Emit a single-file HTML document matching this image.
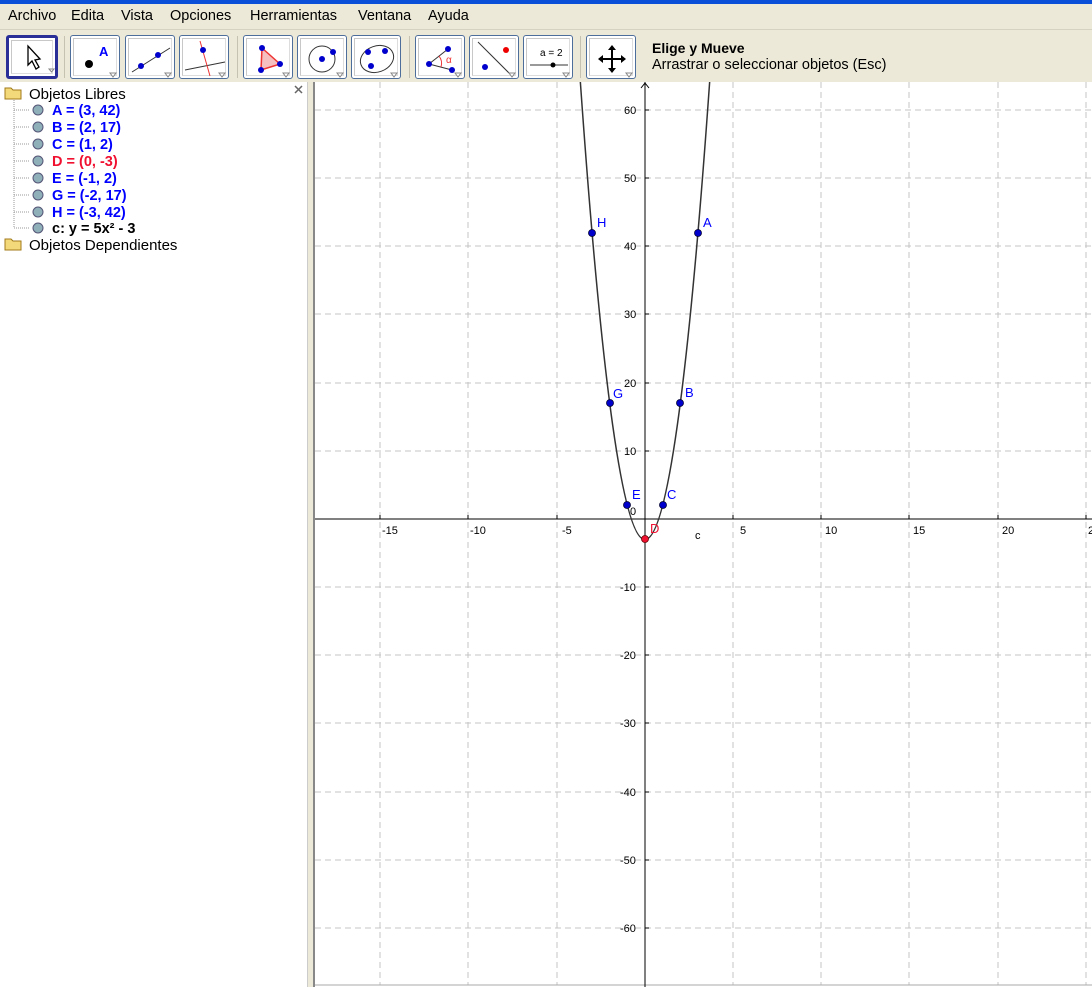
<!DOCTYPE html>
<html><head><meta charset="utf-8"><style>
*{margin:0;padding:0;box-sizing:border-box}
body{width:1092px;height:987px;overflow:hidden;background:#fff;font-family:"Liberation Sans",sans-serif;position:relative}
#top{position:absolute;left:0;top:0;width:1092px;height:4px;background:#0a4fd8}
#menu{position:absolute;left:0;top:4px;width:1092px;height:25px;background:#ece9d8;font-size:14.5px;color:#000}
#menu span{position:absolute;top:4px}
#tb{position:absolute;left:0;top:29px;width:1092px;height:53px;background:#ece9d8;border-top:1px solid #d6d2c2}
.b{position:absolute;top:5px;width:50px;height:44px;border:1px solid #4d6d9a;border-radius:3px;background:#fff}
.b::before{content:"";position:absolute;left:2px;top:2px;right:2px;bottom:2px;border:1px solid #c8c8c8;border-right-color:#ddd;border-bottom-color:#ddd}
.b svg{position:absolute;left:0;top:0}
.sep{position:absolute;top:6px;width:1px;height:42px;background:#c5c2b2}
#left{position:absolute;left:0;top:82px;width:307px;height:905px;background:#fff}
.it{position:absolute;font-size:14.5px;white-space:nowrap}
.bold{font-weight:bold}
</style></head><body>
<div id="top"></div>
<div id="menu">
<span style="left:8px">Archivo</span><span style="left:71px">Edita</span><span style="left:121px">Vista</span><span style="left:170px">Opciones</span><span style="left:250px">Herramientas</span><span style="left:358px">Ventana</span><span style="left:428px">Ayuda</span>
</div>
<div id="tb">
<div class="b" style="left:6px;width:52px;border:3px solid #2a2f98"><svg width="46" height="38"><path d="M19 8 L19 27 L23 23 L27 31 L30 29 L26 22 L31 21 Z" fill="#fff" stroke="#000" stroke-width="1.3"/><path d="M40 31 l5 0 l-2.5 3z" fill="#fff" stroke="#888"/></svg></div>
<div class="sep" style="left:64px"></div>
<div class="b" style="left:70px"><svg width="50" height="44"><circle cx="18" cy="28" r="4" fill="#000"/><text x="28" y="20" font-size="13" font-weight="bold" fill="#00f" font-family="Liberation Sans">A</text><path d="M39 37 l6 0 l-3 4z" fill="#fff" stroke="#888"/></svg></div>
<div class="b" style="left:125px"><svg width="50" height="44"><line x1="6" y1="36" x2="44" y2="12" stroke="#333"/><circle cx="15" cy="30" r="3" fill="#00c"/><circle cx="32" cy="19" r="3" fill="#00c"/><path d="M39 37 l6 0 l-3 4z" fill="#fff" stroke="#888"/></svg></div>
<div class="b" style="left:179px"><svg width="50" height="44"><line x1="5" y1="34" x2="45" y2="26" stroke="#333"/><line x1="20" y1="5" x2="30" y2="40" stroke="#e33"/><circle cx="23" cy="14" r="3" fill="#00c"/><path d="M39 37 l6 0 l-3 4z" fill="#fff" stroke="#888"/></svg></div>
<div class="sep" style="left:237px"></div>
<div class="b" style="left:243px"><svg width="50" height="44"><path d="M18 12 L36 28 L17 34 Z" fill="#f6c0c0" stroke="#e33" stroke-width="1.5"/><circle cx="18" cy="12" r="3" fill="#00c"/><circle cx="36" cy="28" r="3" fill="#00c"/><circle cx="17" cy="34" r="3" fill="#00c"/><path d="M39 37 l6 0 l-3 4z" fill="#fff" stroke="#888"/></svg></div>
<div class="b" style="left:297px"><svg width="50" height="44"><circle cx="24" cy="23" r="13" fill="none" stroke="#333"/><circle cx="24" cy="23" r="3" fill="#00c"/><circle cx="35" cy="16" r="3" fill="#00c"/><path d="M39 37 l6 0 l-3 4z" fill="#fff" stroke="#888"/></svg></div>
<div class="b" style="left:351px"><svg width="50" height="44"><ellipse cx="25" cy="23" rx="17" ry="13" transform="rotate(-20 25 23)" fill="none" stroke="#333"/><circle cx="16" cy="16" r="3" fill="#00c"/><circle cx="33" cy="15" r="3" fill="#00c"/><circle cx="19" cy="30" r="3" fill="#00c"/><path d="M39 37 l6 0 l-3 4z" fill="#fff" stroke="#888"/></svg></div>
<div class="sep" style="left:409px"></div>
<div class="b" style="left:415px"><svg width="50" height="44"><line x1="13" y1="28" x2="32" y2="13" stroke="#333"/><line x1="13" y1="28" x2="36" y2="34" stroke="#333"/><path d="M23 20 A12 12 0 0 1 25 31" fill="none" stroke="#e33"/><text x="30" y="27" font-size="10" fill="#e33">α</text><circle cx="13" cy="28" r="3" fill="#00c"/><circle cx="32" cy="13" r="3" fill="#00c"/><circle cx="36" cy="34" r="3" fill="#00c"/><path d="M39 37 l6 0 l-3 4z" fill="#fff" stroke="#888"/></svg></div>
<div class="b" style="left:469px"><svg width="50" height="44"><line x1="8" y1="6" x2="42" y2="40" stroke="#333"/><circle cx="36" cy="14" r="3" fill="#e00"/><circle cx="15" cy="31" r="3" fill="#00c"/><path d="M39 37 l6 0 l-3 4z" fill="#fff" stroke="#888"/></svg></div>
<div class="b" style="left:523px"><svg width="50" height="44"><text x="16" y="20" font-size="10" font-family="Liberation Sans">a = 2</text><line x1="6" y1="29" x2="44" y2="29" stroke="#333"/><circle cx="29" cy="29" r="2.5" fill="#000"/><path d="M39 37 l6 0 l-3 4z" fill="#fff" stroke="#888"/></svg></div>
<div class="sep" style="left:580px"></div>
<div class="b" style="left:586px"><svg width="50" height="44"><path d="M25 12 V34 M14 23 H36" stroke="#000" stroke-width="2"/><path d="M25 9 l-4 5 h8z M25 37 l-4 -5 h8z M11 23 l5 -4 v8z M39 23 l-5 -4 v8z" fill="#000"/><path d="M39 37 l6 0 l-3 4z" fill="#fff" stroke="#888"/></svg></div>
<div style="position:absolute;left:652px;top:10px;font-size:14px;font-weight:bold">Elige y Mueve</div>
<div style="position:absolute;left:652px;top:27px;font-size:14.5px">Arrastrar o seleccionar objetos (Esc)</div>
</div>
<div id="left">
<svg width="307" height="180" style="position:absolute;left:0;top:0">
<g fill="#f3d97a" stroke="#a07a1a"><path d="M5 6 h6 l2 2 h8 v9 h-16z"/><path d="M5 157 h6 l2 2 h8 v9 h-16z"/></g>
<path d="M14 18 V146 M14 28h15 M14 45h15 M14 62h15 M14 79h15 M14 96h15 M14 113h15 M14 130h15 M14 146h15" stroke="#999" stroke-dasharray="1 1"/>
<g fill="#8fb0b8" stroke="#557"><circle cx="38" cy="28" r="5"/><circle cx="38" cy="45" r="5"/><circle cx="38" cy="62" r="5"/><circle cx="38" cy="79" r="5"/><circle cx="38" cy="96" r="5"/><circle cx="38" cy="113" r="5"/><circle cx="38" cy="130" r="5"/><circle cx="38" cy="146" r="5"/></g>
<path d="M295 4 l7 7 M302 4 l-7 7" stroke="#666" stroke-width="1.5"/>
</svg>
<div class="it" style="left:29px;top:4px;font-size:15px">Objetos Libres</div>
<div class="it bold" style="left:52px;top:21px;color:#00f">A = (3, 42)</div>
<div class="it bold" style="left:52px;top:38px;color:#00f">B = (2, 17)</div>
<div class="it bold" style="left:52px;top:55px;color:#00f">C = (1, 2)</div>
<div class="it bold" style="left:52px;top:72px;color:#f01030">D = (0, -3)</div>
<div class="it bold" style="left:52px;top:89px;color:#00f">E = (-1, 2)</div>
<div class="it bold" style="left:52px;top:106px;color:#00f">G = (-2, 17)</div>
<div class="it bold" style="left:52px;top:123px;color:#00f">H = (-3, 42)</div>
<div class="it bold" style="left:52px;top:139px">c: y = 5x² - 3</div>
<div class="it" style="left:29px;top:155px;font-size:15px">Objetos Dependientes</div>
</div>
<div style="position:absolute;left:307px;top:82px;width:1px;height:905px;background:#ccc"></div>
<div style="position:absolute;left:308px;top:82px;width:5px;height:905px;background:#ece9d8"></div>
<div style="position:absolute;left:313px;top:82px;width:2px;height:905px;background:#888"></div>
<svg width="777" height="905" style="position:absolute;left:315px;top:82px" font-family="Liberation Sans" font-size="11">
<g stroke="#c4c4c4" stroke-dasharray="6 4" stroke-width="1">
<path d="M65 0V903 M153 0V903 M242 0V903 M418 0V903 M506 0V903 M594 0V903 M683 0V903 M771 0V903"/>
<path d="M0 28H777 M0 96H777 M0 164H777 M0 232H777 M0 301H777 M0 369H777 M0 505H777 M0 573H777 M0 641H777 M0 710H777 M0 778H777 M0 846H777"/>
</g>
<line x1="0" y1="903" x2="777" y2="903" stroke="#aaa"/>
<line x1="0" y1="437" x2="777" y2="437" stroke="#000"/>
<line x1="330" y1="0" x2="330" y2="905" stroke="#000"/>
<path d="M326 6 L330 1 L334 6" fill="none" stroke="#000"/>
<g stroke="#000"><path d="M65 433v4 M153 433v4 M242 433v4 M418 433v4 M506 433v4 M594 433v4 M683 433v4 M771 433v4 M330 28h4 M330 96h4 M330 164h4 M330 232h4 M330 301h4 M330 369h4 M330 505h4 M330 573h4 M330 641h4 M330 710h4 M330 778h4 M330 846h4"/></g>
<g fill="#000">
<text x="67" y="452">-15</text><text x="155" y="452">-10</text><text x="247" y="452">-5</text><text x="425" y="452">5</text><text x="510" y="452">10</text><text x="598" y="452">15</text><text x="687" y="452">20</text><text x="773" y="452">25</text>
<text x="309" y="32">60</text><text x="309" y="100">50</text><text x="309" y="168">40</text><text x="309" y="236">30</text><text x="309" y="305">20</text><text x="309" y="373">10</text><text x="315" y="433">0</text>
<text x="305" y="509">-10</text><text x="305" y="577">-20</text><text x="305" y="645">-30</text><text x="305" y="714">-40</text><text x="305" y="782">-50</text><text x="305" y="850">-60</text>
<text x="380" y="457">c</text>
</g>
<path fill="none" stroke="#333" stroke-width="1.5" d="M265.35 0 Q330 915 394.65 0"/>
<g fill="#00c" stroke="#003" stroke-width="0.8">
<circle cx="383" cy="151" r="3.5"/><circle cx="365" cy="321" r="3.5"/><circle cx="348" cy="423" r="3.5"/><circle cx="312" cy="423" r="3.5"/><circle cx="295" cy="321" r="3.5"/><circle cx="277" cy="151" r="3.5"/></g>
<circle cx="330" cy="457" r="3.5" fill="#f01030" stroke="#600" stroke-width="0.8"/>
<g fill="#00f" font-size="13">
<text x="388" y="145">A</text><text x="370" y="315">B</text><text x="352" y="417">C</text><text x="317" y="417">E</text><text x="298" y="316">G</text><text x="282" y="145">H</text></g>
<text x="335" y="451" fill="#f01030" font-size="13">D</text>
</svg>
</body></html>
